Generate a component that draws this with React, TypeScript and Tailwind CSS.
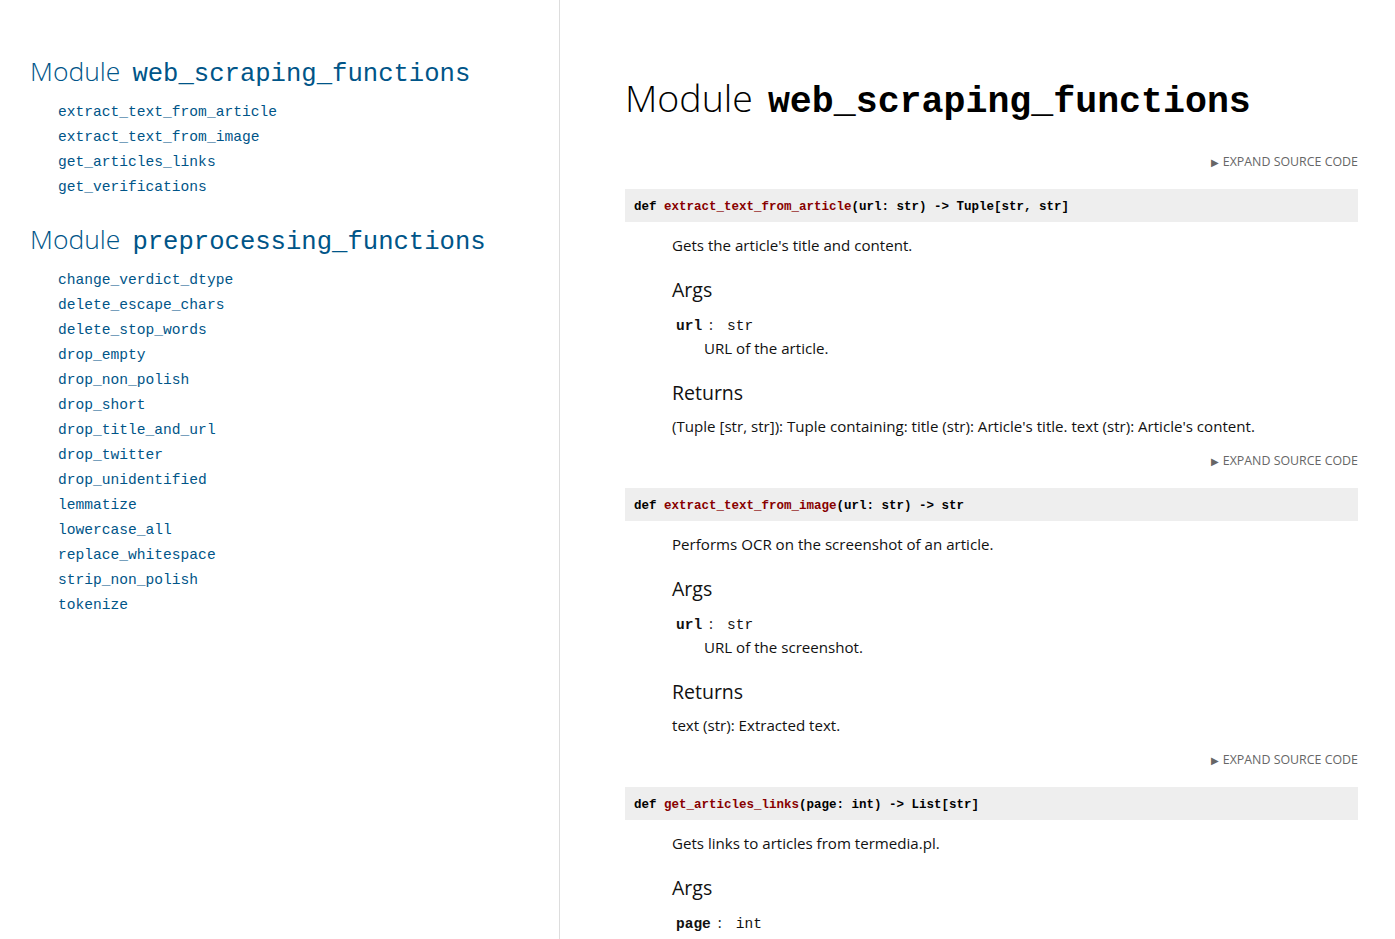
import React from 'react';

const sans = "font-['Open_Sans','Noto_Sans',sans-serif]";
const mono = "font-['Liberation_Mono','DejaVu_Sans_Mono',monospace]";

const modules = [
  {
    name: 'web_scraping_functions',
    items: ['extract_text_from_article', 'extract_text_from_image', 'get_articles_links', 'get_verifications'],
  },
  {
    name: 'preprocessing_functions',
    items: [
      'change_verdict_dtype',
      'delete_escape_chars',
      'delete_stop_words',
      'drop_empty',
      'drop_non_polish',
      'drop_short',
      'drop_title_and_url',
      'drop_twitter',
      'drop_unidentified',
      'lemmatize',
      'lowercase_all',
      'replace_whitespace',
      'strip_non_polish',
      'tokenize',
    ],
  },
];

interface Fn {
  name: string;
  params: string;
  ret: string;
  desc: string;
  arg: string;
  argType: string;
  argDesc: string;
  returns?: string;
}

const functions: Fn[] = [
  {
    name: 'extract_text_from_article',
    params: 'url: str',
    ret: 'Tuple[str, str]',
    desc: "Gets the article's title and content.",
    arg: 'url',
    argType: 'str',
    argDesc: 'URL of the article.',
    returns: "(Tuple [str, str]): Tuple containing: title (str): Article's title. text (str): Article's content.",
  },
  {
    name: 'extract_text_from_image',
    params: 'url: str',
    ret: 'str',
    desc: 'Performs OCR on the screenshot of an article.',
    arg: 'url',
    argType: 'str',
    argDesc: 'URL of the screenshot.',
    returns: 'text (str): Extracted text.',
  },
  {
    name: 'get_articles_links',
    params: 'page: int',
    ret: 'List[str]',
    desc: 'Gets links to articles from termedia.pl.',
    arg: 'page',
    argType: 'int',
    argDesc: '',
  },
];

const ExpandSource: React.FC<{ className?: string }> = ({ className }) => (
  <div className={`flex justify-end items-center h-[20px] text-[12.4px] text-[#666] uppercase ${sans} ${className ?? ''}`}>
    <span className="text-[10px] mr-[4px] leading-none text-[#666]">▶</span>
    <span>Expand source code</span>
  </div>
);

const FunctionDoc: React.FC<{ fn: Fn; last?: boolean }> = ({ fn, last }) => (
  <div>
    <div className={`bg-[#eeeeee] h-[33px] flex items-center px-[9px] pt-[3px] text-[12.5px] font-bold text-black ${mono}`}>
      <span className="whitespace-pre">def </span>
      <span className="text-[#880000]">{fn.name}</span>
      <span className="whitespace-pre">({fn.params}) -&gt; {fn.ret}</span>
    </div>
    <div className={`pl-[47px] text-[#111] ${sans}`}>
      <p className="mt-[11px] leading-[24px] text-[15.1px]">{fn.desc}</p>
      <h3 className="mt-[19px] leading-[28px] text-[19.5px]">Args</h3>
      <div className="mt-[8px] ml-[4px] h-[24px] leading-[24px] text-[15px] whitespace-pre">
        <span className={`font-bold text-[14.5px] leading-none ${mono}`}>{fn.arg}</span>
        <span className="leading-none ml-[7px] mr-[14px]">:</span>
        <span className={`text-[14.5px] leading-none ${mono}`}>{fn.argType}</span>
      </div>
      {fn.argDesc && <p className="ml-[32px] leading-[24px] text-[15.1px]">{fn.argDesc}</p>}
      {fn.returns && (
        <>
          <h3 className="mt-[19px] leading-[28px] text-[19.5px]">Returns</h3>
          <p className="mt-[7px] leading-[24px] text-[15.1px]">{fn.returns}</p>
        </>
      )}
    </div>
    {!last && <ExpandSource className="mt-[13px] mb-[17px]" />}
  </div>
);

export default function App() {
  return (
    <div className="flex min-h-[939px] h-[939px] overflow-hidden bg-white">
      <nav className="w-[560px] shrink-0 border-r border-[#dddddd] pl-[30px] pt-[55px]">
        {modules.map((m, i) => (
          <div key={m.name} className={i > 0 ? 'mt-[23px]' : ''}>
            <h2 className="h-[40px] leading-[40px] text-[#058] whitespace-nowrap">
              <span className={`text-[26.5px] font-light leading-none ${sans}`}>Module</span>
              <span className={`ml-[12px] text-[25.6px] leading-none ${mono}`}>{m.name}</span>
            </h2>
            <ul className="mt-[5px] ml-[28px]">
              {m.items.map((it) => (
                <li key={it} className={`leading-[25px] text-[14.6px] text-[#058] ${mono}`}>
                  {it}
                </li>
              ))}
            </ul>
          </div>
        ))}
      </nav>
      <main className="flex-1 pl-[65px] pr-[37px] pt-[79px]">
        <h1 className="h-[50px] leading-[50px] text-black whitespace-nowrap">
          <span className={`text-[37.5px] font-light leading-none ${sans}`}>Module</span>
          <span className={`ml-[15px] text-[36.6px] font-bold leading-none ${mono}`}>web_scraping_functions</span>
        </h1>
        <ExpandSource className="mt-[23px] mb-[17px]" />
        {functions.map((fn, i) => (
          <FunctionDoc key={fn.name} fn={fn} last={i === functions.length - 1} />
        ))}
      </main>
    </div>
  );
}
